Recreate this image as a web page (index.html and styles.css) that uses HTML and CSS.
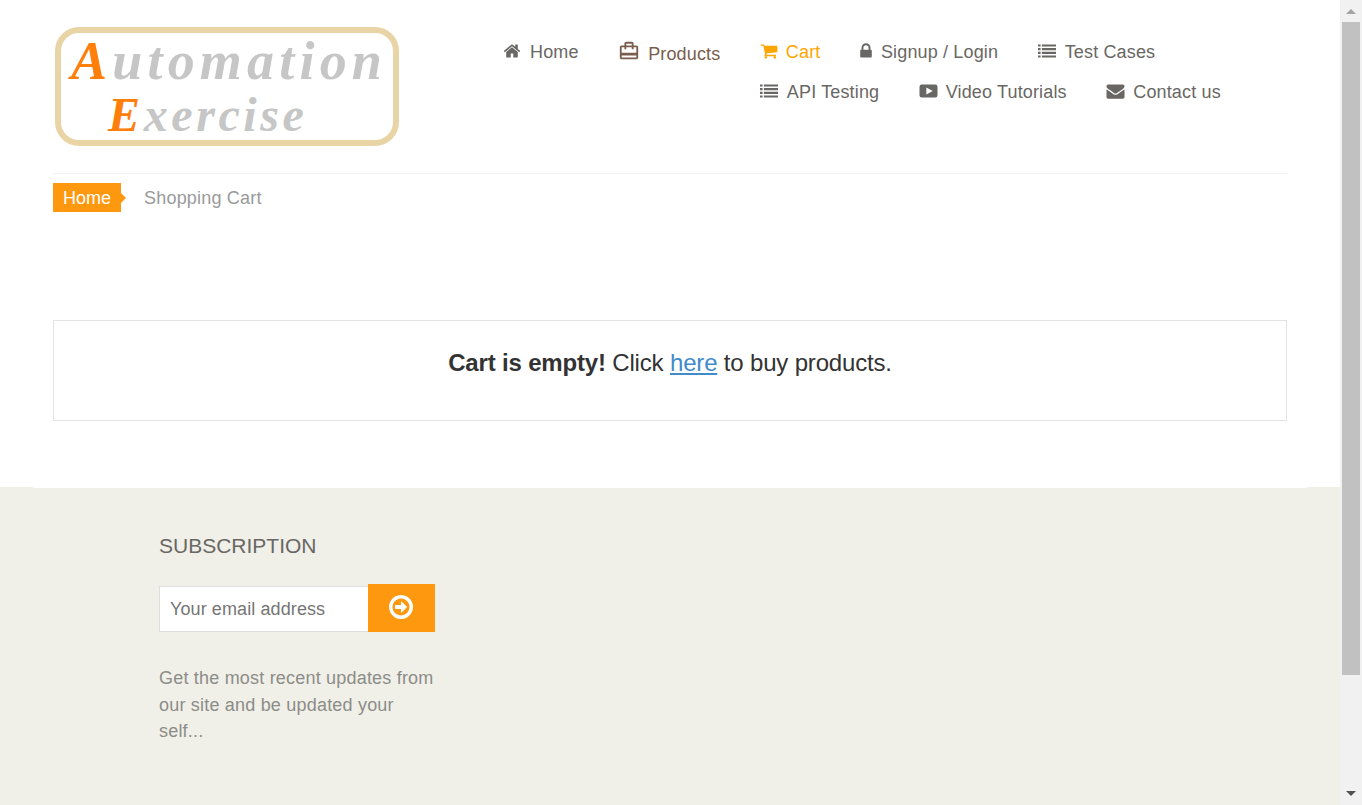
FILE: index.html
```html
<!DOCTYPE html>
<html lang="en">

<head>
    <meta charset="UTF-8">
    <meta name="viewport" content="width=device-width, initial-scale=1.0">
    <title>Automation Exercise - Checkout</title>
    <link rel="stylesheet" href="styles.css">
</head>

<body>
    <div class="page">
        <header class="header">
            <a class="logo" href="/">
                <span class="logo-line"><b>A</b>utomation</span>
                <span class="logo-line logo-line-two"><b>E</b>xercise</span>
            </a>
            <ul class="nav">
                <li><a href="/"><svg class="icon" viewBox="0 0 1792 1792"><path d="M1472 992v480q0 26-19 45t-45 19h-384v-384h-256v384h-384q-26 0-45-19t-19-45v-480q0-1 .5-3t.5-3l575-474 575 474q1 2 1 6zm223-69l-62 74q-8 9-21 11h-3q-13 0-21-7l-692-577-692 577q-12 8-24 7-13-2-21-11l-62-74q-8-10-7-23.5t11-21.5l719-599q32-26 76-26t76 26l244 204v-195q0-14 9-23t23-9h192q14 0 23 9t9 23v408l219 182q10 8 11 21.5t-7 23.5z"/></svg>Home</a></li>
                <li class="nav-products"><a href="/products"><svg class="icon icon-travel" viewBox="0 0 24 24"><path d="M20 6h-3V4c0-1.11-.89-2-2-2H9c-1.11 0-2 .89-2 2v2H4c-1.11 0-2 .89-2 2v11c0 1.11.89 2 2 2h16c1.11 0 2-.89 2-2V8c0-1.11-.89-2-2-2zM9 4h6v2H9V4zm11 15H4v-2h16v2zm0-5H4V8h3v2h2V8h6v2h2V8h3v6z"/></svg>Products</a></li>
                <li class="nav-active"><a href="/view_cart"><svg class="icon icon-cart" viewBox="0 0 1792 1792"><path d="M704 1536q0 52-38 90t-90 38-90-38-38-90 38-90 90-38 90 38 38 90zm896 0q0 52-38 90t-90 38-90-38-38-90 38-90 90-38 90 38 38 90zm128-1088v512q0 24-16.5 42.5t-40.5 21.5l-1044 122q13 60 13 70 0 16-24 64h920q26 0 45 19t19 45-19 45-45 19h-1024q-26 0-45-19t-19-45q0-11 8-31.5t16-36 21.5-40 15.5-29.5l-177-823h-204q-26 0-45-19t-19-45 19-45 45-19h256q16 0 28.5 6.5t19.5 15.5 13 24.5 8 26 5.5 29.5 4.5 26h1201q26 0 45 19t19 45z"/></svg>Cart</a></li>
                <li><a href="/login"><svg class="icon icon-lock" viewBox="320 0 1152 1792"><path d="M640 768h512v-192q0-106-75-181t-181-75-181 75-75 181v192zm832 96v576q0 40-28 68t-68 28h-960q-40 0-68-28t-28-68v-576q0-40 28-68t68-28h32v-192q0-184 132-316t316-132 316 132 132 316v192h32q40 0 68 28t28 68z"/></svg>Signup / Login</a></li>
                <li><a href="/test_cases"><svg class="icon" viewBox="0 0 1792 1792"><path d="M0 240h256v210H0zM384 240h1408v210H384zM0 607h256v210H0zM384 607h1408v210H384zM0 974h256v210H0zM384 974h1408v210H384zM0 1342h256v210H0zM384 1342h1408v210H384z"/></svg>Test Cases</a></li>
                <li><a href="/api_list"><svg class="icon" viewBox="0 0 1792 1792"><path d="M0 240h256v210H0zM384 240h1408v210H384zM0 607h256v210H0zM384 607h1408v210H384zM0 974h256v210H0zM384 974h1408v210H384zM0 1342h256v210H0zM384 1342h1408v210H384z"/></svg>API Testing</a></li>
                <li><a href="/video_tutorials"><svg class="icon icon-wide" viewBox="0 0 1792 1792"><path fill-rule="evenodd" d="M220 256h1352q220 0 220 220v840q0 220-220 220H220q-220 0-220-220V476q0-220 220-220zM680 540v712l640-356z"/></svg>Video Tutorials</a></li>
                <li><a href="/contact_us"><svg class="icon icon-wide" viewBox="0 0 1792 1792"><path d="M1792 710v794q0 66-47 113t-113 47h-1472q-66 0-113-47t-47-113v-794q44 49 101 87 362 246 497 345 57 42 92.5 65.5t94.5 48 110 24.5h2q51 0 110-24.5t94.5-48 92.5-65.5q170-123 498-345 57-39 100-87zm0-294q0 79-49 151t-122 123q-376 261-468 325-10 7-42.5 30.5t-54 38-52 32.5-57.5 27-50 9h-2q-23 0-50-9t-57.5-27-52-32.5-54-38-42.5-30.5q-91-64-262-182.5t-205-142.5q-62-42-117-115.5t-55-136.5q0-78 41.5-130t118.5-52h1472q65 0 112.5 47t47.5 113z"/></svg>Contact us</a></li>
            </ul>
        </header>

        <div class="breadcrumb">
            <a class="crumb-home" href="/">Home</a>
            <span class="crumb-current">Shopping Cart</span>
        </div>

        <div class="cart-empty">
            <p><b>Cart is empty!</b> Click <a href="/products">here</a> to buy products.</p>
        </div>

        <footer class="footer">
            <div class="footer-line"></div>
            <div class="subscribe">
                <h2>Subscription</h2>
                <form class="subscribe-form">
                    <input type="email" placeholder="Your email address">
                    <button type="submit" aria-label="Subscribe"><svg viewBox="0 0 1792 1792"><path d="M1280 896q0 14-9 23l-320 320q-9 9-23 9-13 0-22.5-9.5t-9.5-22.5v-192h-352q-13 0-22.5-9.5t-9.5-22.5v-192q0-13 9.5-22.5t22.5-9.5h352v-192q0-14 9-23t23-9q12 0 24 10l319 319q9 9 9 23zm160 0q0-148-73-273t-198-198-273-73-273 73-198 198-73 273 73 273 198 198 273 73 273-73 198-198 73-273zm224 0q0 209-103 385.5t-279.5 279.5-385.5 103-385.5-103-279.5-279.5-103-385.5 103-385.5 279.5-279.5 385.5-103 385.5 103 279.5 279.5 103 385.5z"/></svg></button>
                </form>
                <p>Get the most recent updates from our site and be updated your self...</p>
            </div>
        </footer>
    </div>

    <div class="scrollbar">
        <span class="arrow-up"></span>
        <span class="thumb"></span>
        <span class="arrow-down"></span>
    </div>
</body>

</html>
```

FILE: styles.css
```css
body {
    font-family: "Liberation Sans", Arial, sans-serif;
    font-size: 18px;
    color: #696763;
    background-color: #ffffff;
    margin: 0;
    height: 805px;
    overflow: hidden;
    display: flex;
}

a {
    color: inherit;
    text-decoration: none;
}

.page {
    width: 1340px;
    height: 805px;
    overflow: hidden;
    display: flex;
    flex-direction: column;
}

.header {
    margin: 0 53px;
    padding-top: 27px;
    height: 146px;
    border-bottom: 1px solid #f3f3f0;
    display: flex;
}

.logo {
    width: 344px;
    height: 119px;
    margin-left: 2px;
    box-sizing: border-box;
    border: 6px solid #e8d4a5;
    border-radius: 24px;
    font-family: "Liberation Serif", serif;
    font-style: italic;
    font-weight: bold;
    color: #c6c6c6;
    display: flex;
    flex-direction: column;
    padding: 2px 0 0 10px;
}

.logo-line {
    font-size: 54px;
    line-height: 52px;
    letter-spacing: 5.2px;
}

.logo-line-two {
    font-size: 48px;
    line-height: 55px;
    letter-spacing: 3.6px;
    padding-left: 37px;
}

.logo b {
    color: #ff7f0a;
}

.nav {
    list-style: none;
    margin: 0 0 0 104px;
    padding: 0;
    flex: 1;
    letter-spacing: 0.15px;
}

.nav li {
    float: left;
    height: 40px;
    margin-right: 39.5px;
    line-height: 50px;
}

.nav .nav-products {
    height: 42px;
    color: #7b5d4d;
    line-height: 54px;
}

.nav .nav-active {
    color: #ffa500;
}

.icon {
    width: 18px;
    height: 18px;
    margin-right: 9px;
    fill: currentColor;
    vertical-align: -2px;
}

.icon-travel {
    width: 22px;
    height: 22px;
    margin-right: 8px;
    vertical-align: -2px;
}

.icon-cart {
    margin-right: 8px;
}

.icon-lock {
    width: 12px;
}

.icon-wide {
    width: 19px;
    margin-right: 8px;
}

.breadcrumb {
    margin: 9px 53px 0;
    height: 29px;
    display: flex;
    align-items: center;
}

.crumb-home {
    position: relative;
    background-color: #fe980f;
    color: #ffffff;
    height: 29px;
    line-height: 30px;
    padding: 0 10px;
    width: 48px;
}

.crumb-home::after {
    content: "";
    position: absolute;
    left: 100%;
    top: 10px;
    border-left: 5px solid #fe980f;
    border-top: 5px solid transparent;
    border-bottom: 5px solid transparent;
}

.crumb-current {
    margin-left: 23px;
    padding-top: 2px;
    color: #9a9a9a;
    letter-spacing: 0.2px;
}

.cart-empty {
    margin: 108px 53px 0;
    height: 101px;
    box-sizing: border-box;
    border: 1px solid #e3e3e3;
    text-align: center;
    font-size: 24px;
    color: #333333;
    letter-spacing: -0.17px;
}

.cart-empty p {
    margin: 28px 0 0;
}

.cart-empty a {
    color: #428bca;
    text-decoration: underline;
}

.footer {
    margin-top: 66px;
    flex: 1;
    background-color: #f0f0e9;
}

.footer-line {
    height: 1px;
    margin: 0 33px;
    background-color: #ffffff;
}

.subscribe {
    width: 276px;
    margin-left: 159px;
    padding-top: 46px;
}

.subscribe h2 {
    margin: 0;
    font-size: 21px;
    font-weight: normal;
    line-height: 24px;
    text-transform: uppercase;
}

.subscribe-form {
    display: flex;
    align-items: flex-end;
    margin-top: 26px;
}

.subscribe-form input {
    width: 209px;
    height: 46px;
    box-sizing: border-box;
    padding: 0 10px;
    border: 1px solid #dddddd;
    border-right: none;
    background-color: #ffffff;
    font-family: inherit;
    font-size: 18px;
    letter-spacing: 0.1px;
}

.subscribe-form input::placeholder {
    color: #757575;
    opacity: 1;
}

.subscribe-form button {
    width: 67px;
    height: 48px;
    padding: 0 1px 3px 0;
    border: none;
    background-color: #fe980f;
    color: #ffffff;
    display: flex;
    align-items: center;
    justify-content: center;
}

.subscribe-form svg {
    width: 28px;
    height: 28px;
    fill: currentColor;
}

.subscribe p {
    margin: 33px 0 0;
    line-height: 26.6px;
    color: #8c8c88;
    letter-spacing: 0.2px;
}

.scrollbar {
    width: 22px;
    height: 805px;
    background-color: #f1f1f1;
    display: flex;
    flex-direction: column;
    align-items: center;
}

.arrow-up {
    margin-top: 9px;
    border-left: 5px solid transparent;
    border-right: 5px solid transparent;
    border-bottom: 5px solid #a3a3a3;
}

.thumb {
    width: 18px;
    height: 653px;
    margin-top: 8px;
    background-color: #c1c1c1;
}

.arrow-down {
    margin-top: 116px;
    border-left: 5px solid transparent;
    border-right: 5px solid transparent;
    border-top: 5px solid #505050;
}
```
